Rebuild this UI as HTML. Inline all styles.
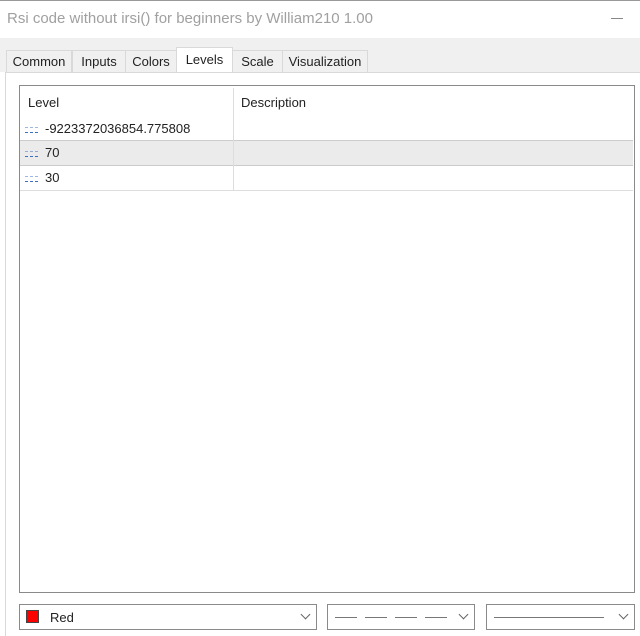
<!DOCTYPE html><html><head><style>
body{margin:0;width:640px;height:635px;background:#fff;font-family:"Liberation Sans",sans-serif;font-size:13px;color:#222;position:relative;overflow:hidden}
.a{position:absolute}
.tab{position:absolute;top:50px;height:22px;border:1px solid #d9d9d9;border-bottom:none;background:#f0f0f0;font-size:13px;line-height:22px;text-align:center;color:#222}
.dash{display:inline-block;width:14px;height:8px;vertical-align:middle;margin-right:6px;position:relative}
.dash:before,.dash:after{content:"";position:absolute;left:0;right:0;height:1px;background:repeating-linear-gradient(90deg,#3b6fc4 0 3px,transparent 3px 5px)}
.dash:before{top:1px;opacity:.5}.dash:after{top:6px}
.row{position:absolute;left:20px;width:613px;height:24px;line-height:24px;border-bottom:1px solid #ddd}
.cb{position:absolute;top:604px;height:24px;border:1px solid #8a8a8a;background:#fff}
.chev{position:absolute;right:7px;top:6px;width:6px;height:6px;border-right:1px solid #666;border-bottom:1px solid #666;transform:rotate(45deg)}
</style></head><body>
<div class="a" style="left:0;top:0;width:640px;height:1px;background:#999"></div>
<div class="a" style="left:7px;top:10px;font-size:15px;color:#a0a0a0">Rsi code without irsi() for beginners by William210 1.00</div>
<div class="a" style="left:611px;top:18px;width:12px;height:1px;background:#888"></div>
<div class="a" style="left:0;top:38px;width:640px;height:34px;background:#f0f0f0"></div>
<div class="tab" style="left:6px;width:64px">Common</div>
<div class="tab" style="left:72px;width:52px">Inputs</div>
<div class="tab" style="left:125px;width:50px">Colors</div>
<div class="tab" style="left:176px;top:47px;height:26px;width:55px;background:#fff;line-height:24px">Levels</div>
<div class="tab" style="left:232px;width:49px">Scale</div>
<div class="tab" style="left:282px;width:84px">Visualization</div>
<div class="a" style="left:5px;top:72px;width:635px;height:563px;background:#fff;border-left:1px solid #d9d9d9;border-top:1px solid #d9d9d9"></div>
<div class="a" style="left:19px;top:85px;width:614px;height:506px;border:1px solid #8a8a8a;background:#fff"></div>
<div class="a" style="left:233px;top:88px;width:1px;height:102px;background:#ddd"></div>
<div class="a" style="left:28px;top:95px">Level</div>
<div class="a" style="left:241px;top:95px">Description</div>
<div class="row" style="top:117px;border-bottom:1px solid #ccc;height:23px"><span style="position:absolute;left:5px"><span class="dash"></span>-9223372036854.775808</span></div>
<div class="row" style="top:141px;background:#ebebeb;border-bottom:1px solid #ccc"><span style="position:absolute;left:5px"><span class="dash"></span>70</span></div>
<div class="row" style="top:166px"><span style="position:absolute;left:5px"><span class="dash"></span>30</span></div>
<div class="a" style="left:233px;top:117px;width:1px;height:74px;background:#ddd"></div>
<div class="cb" style="left:19px;width:296px"><div class="a" style="left:6px;top:5px;width:13px;height:13px;background:#f00;border:1px solid #444;box-sizing:border-box"></div><div class="a" style="left:30px;top:5px">Red</div><div class="chev"></div></div>
<div class="cb" style="left:327px;width:146px"><div class="a" style="left:7px;top:12px;width:112px;height:1px;background:repeating-linear-gradient(90deg,#777 0 22px,transparent 22px 30px)"></div><div class="chev"></div></div>
<div class="cb" style="left:486px;width:147px"><div class="a" style="left:7px;top:12px;width:110px;height:1px;background:#777"></div><div class="chev"></div></div>
</body></html>
